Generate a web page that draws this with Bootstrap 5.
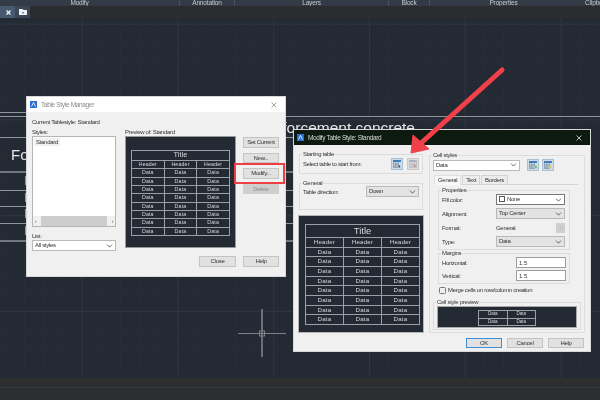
<!DOCTYPE html>
<html lang="en">
<head>
    <meta charset="UTF-8">
    <title>Table Style</title>
    <link href="https://cdn.jsdelivr.net/npm/bootstrap@5.3.0/dist/css/bootstrap.min.css" rel="stylesheet">
    <style>
        html, body { height: 400px; overflow: hidden; background: #232a33; }
        body { font-family: "Liberation Sans", Arial, sans-serif; font-size: 6px; line-height: 8px; letter-spacing: -.3px; color: #333; }

        /* autocad chrome */
        .cad-screen { width: 600px; height: 400px; position: relative; overflow: hidden; filter: blur(.3px); }
        .cad-ribbon { height: 6px; background: #343b47; color: #c4c9d0; overflow: hidden; letter-spacing: -.15px; }
        .cad-ribbon span { height: 6px; line-height: 5px; font-size: 6.5px; text-align: center; border-right: 1px solid #4a515c; }
        .cad-tabs { height: 12px; background: #2a2c2f; }
        .cad-tab { width: 30px; background: #3b4656; }
        .cad-tab-x { width: 15px; background: #46596f; }
        .cad-canvas {
            flex: 1 1 auto;
            position: relative;
            background-color: #232a33;
            background-image:
                linear-gradient(90deg, #2e3540 1px, transparent 1px),
                linear-gradient(#2e3540 1px, transparent 1px),
                linear-gradient(90deg, #262d36 1px, transparent 1px),
                linear-gradient(#262d36 1px, transparent 1px);
            background-size: 95.8px 100%, 100% 95.8px, 19.16px 100%, 100% 19.16px;
            background-position: 81.6px 0, 0 5.6px, 5px 0, 0 5.4px;
        }
        .cad-status { height: 22px; background: #2c2e30; }
        .cad-status div { height: 1px; margin-top: 9px; background: #2f3a43; }
        .cad-drawing { position: absolute; left: 0; top: 0; letter-spacing: 0; }
        .cad-drawing text { font-family: "Liberation Sans", Arial, sans-serif; fill: #e4e6e8; }

        /* windows */
        .win { position: absolute; background: #f0f0f0; box-shadow: 0 0 0 1px #d8d8d8; }
        .win-manager { left: 27px; top: 97px; width: 258px; height: 179px; }
        .win-modify { left: 294px; top: 130px; width: 296px; height: 221px; }
        .win-title { height: 15px; padding: 0 4px 0 3px; background: #fff; color: #8a8a8a; font-size: 6.5px; letter-spacing: -.33px; }
        .win-modify .win-title { background: #0c1a0f; color: #d8dcd8; }
        .win-icon { width: 7px; height: 7px; margin-right: 4px; flex: none; }

        /* form bits squeezed to the size of the screenshot */
        .w-label { display: block; white-space: nowrap; }
        .w-btn {
            width: 36px; height: 10.5px; padding: 0; font-size: 6px; line-height: 9px; letter-spacing: -.3px; color: #333;
            background: #e1e1e1; border: 1px solid #c4c4c4; border-radius: 0;
        }
        .w-btn.disabled, .w-btn:disabled { background: #cfcfcf; color: #8c8c8c; border-color: #cfcfcf; opacity: 1; }
        .w-btn-ok { border-color: #3f8fd6; }
        .w-more { width: 9px; height: 10px; line-height: 7px; }
        .w-select {
            height: 11px; min-height: 0; padding: 0 0 0 2px; font-size: 6px; line-height: 9px; letter-spacing: -.3px; color: #333;
            border: 1px solid #b9b9b9; border-radius: 0; background-position: right 2px center; background-size: 7px 6px;
        }
        .w-select-grey { background-color: #e3e3e3; }
        .w-select-dark { border-color: #777; }
        .w-input {
            width: 50px; height: 11px; min-height: 0; padding: 0 0 0 2px; font-size: 6px; line-height: 9px; color: #333;
            border: 1px solid #9d9d9d; border-radius: 0;
        }
        .w-group { margin: 0; padding: 0 3px 2px 3px; border: 1px solid #dcdcdc; min-width: 0; }
        .w-group legend {
            float: none; width: auto; margin: 0 0 0 -1px; padding: 0 1px; font-size: 6px; line-height: 8px; color: #333;
        }
        .w-tool { width: 12px; height: 12px; padding: 1px; flex: none; background: #dcdcdc; border: 1px solid #c8c8c8; display: flex; }
        .w-tool-on { background: #cfdce8; border-color: #a9bfd2; }

        /* manager */
        .mgr-body { padding: 6px 6px 0 5px; }
        .mgr-list { width: 84px; height: 91px; background: #fff; border: 1px solid #b5b5b5; }
        .mgr-item { margin: 1px; padding: 0 2px; background: #f0f0f0; width: 26px; }
        .mgr-scroll { height: 10px; background: #f0f0f0; color: #555; font-size: 5px; line-height: 10px; padding: 0 2px; }
        .mgr-thumb { flex: 1 1 auto; margin: 0 5px; background: #cdcdcd; }
        .mgr-preview { width: 111px; height: 112px; padding: 13px 5px 0 5px; background: #232a33; border: 1px solid #9a9a9a; }
        .mgr-side { width: 36px; margin-left: 7px; padding-top: 1px; gap: 5px; }
        .mgr-red { position: absolute; left: 207px; top: 66px; width: 51px; height: 21px; border: 2px solid #ec4046; pointer-events: none; }

        /* the little cad tables */
        .cad-table { margin: 0; width: 100%; table-layout: fixed; border-collapse: collapse; --bs-table-bg: transparent; --bs-table-color: #d6d9dc; color: #d6d9dc; }
        .cad-table td, .cad-table th {
            padding: 0; border: 1px solid #9aa0a6; text-align: center; font-weight: 400;
            background: transparent; color: #d6d9dc; box-shadow: none;
        }
        .cad-small td, .cad-small th { height: 8px; font-size: 5.2px; line-height: 6px; letter-spacing: .2px; }
        .cad-small tr:nth-child(3n) td { height: 9px; }
        .cad-small th.cad-cap { height: 10px; font-size: 7.5px; line-height: 8px; letter-spacing: 0; }
        .cad-big td, .cad-big th { height: 10px; font-size: 6.2px; line-height: 7px; letter-spacing: .2px; }
        .cad-big tr:nth-child(3n) td { height: 9px; }
        .cad-big th.cad-cap { height: 13px; font-size: 9.5px; line-height: 11px; letter-spacing: 0; }
        .cad-mini td { height: 7.5px; font-size: 4.5px; line-height: 5px; letter-spacing: 0; }

        /* modify */
        .mod-left { width: 126px; margin: 5px 5px 0 4px; }
        .mod-left .w-group { margin: 0 1px 5px 1px; }
        .mod-preview { height: 118px; padding: 8px 3px 0 6px; background: #232a33; border: 1px solid #b5b5b5; }
        .mod-right { width: 156px; margin-top: 6px; }
        .mod-panel { height: 182px; padding-bottom: 0; }
        .mod-tabs { --bs-nav-tabs-border-color: #d4d4d4; margin: 4px 3px 0 1px; height: 10px; flex-wrap: nowrap; }
        .mod-tabs .nav-link {
            padding: 0 3px; font-size: 6px; line-height: 8px; height: 10px; color: #333; border-radius: 0;
            border: 1px solid #d4d4d4; margin: 0 1px 0 0; background: #ececec;
        }
        .mod-tabs .nav-link.active { background: #f7f7f7; color: #333; border-bottom-color: #f7f7f7; }
        .mod-page { margin: 1px 11px 0 5px; }
        .mod-row { height: 11px; margin-bottom: 3px; }
        .mod-field { width: 69px; margin-left: auto; margin-right: 1px; }
        .mod-check { width: 7px; height: 7px; margin: 0 2px 0 0; border-radius: 0; border: 1px solid #777; background-color: #f0f0f0; float: none; }
        .mod-cellprev { height: 22px; padding-top: 3px; background: #232a33; border: 1px solid #a8a8a8; }
        .mod-foot { position: absolute; right: 6px; bottom: 3px; gap: 5px; }
        .swatch { width: 6px; height: 6px; margin-right: 2px; border: 1px solid #555; background: #fff; display: inline-block; vertical-align: -1px; }
    </style>
</head>
<body>
<div class="cad-screen d-flex flex-column">

    <!-- ribbon panel titles, mostly cut off by the top of the picture -->
    <div class="cad-ribbon d-flex flex-shrink-0">
        <span class="flex-shrink-0" style="width: 180px; padding-right: 20px">Modify</span>
        <span class="flex-shrink-0" style="width: 55px">Annotation</span>
        <span class="flex-shrink-0" style="width: 154px">Layers</span>
        <span class="flex-shrink-0" style="width: 41px">Block</span>
        <span class="flex-shrink-0" style="width: 148px; border-right-color: #343b47">Properties</span>
        <span class="flex-shrink-0 border-0" style="width: 22px; text-align: left; padding-left: 7px; overflow: hidden; white-space: nowrap">Clipboard</span>
    </div>

    <div class="cad-tabs d-flex flex-shrink-0">
        <div class="cad-tab d-flex">
            <div class="cad-tab-x d-flex align-items-center justify-content-end pe-1">
                <svg width="5" height="5" viewBox="0 0 5 5"><path d="M0.5 0.5l4 4M4.5 0.5l-4 4" stroke="#fff" stroke-width="1.1"/></svg>
            </div>
            <div class="d-flex align-items-center ps-1">
                <svg width="8" height="6" viewBox="0 0 8 6"><path d="M0 0h3.5l1 1H8v5H0z" fill="#eef1f5"/><path d="M3 3h2v1.500H3z" fill="#7d93ad"/></svg>
            </div>
        </div>
    </div>

    <div class="cad-canvas">
        <svg class="cad-drawing" width="600" height="360" viewBox="0 18 600 360">
            <!-- table in the drawing, behind the dialogs -->
            <g stroke="#8f959c" fill="none">
                <path d="M0 112.500H30M0 116.500H600M0 137.500H294M0 190.500H294M0 206.500H294M0 223.500H294"/>
                <path d="M0 172H294M0 241H294" stroke-width="2" stroke="#70767d"/>
            </g>
            <text x="11" y="160" font-size="15">Fo</text>
            <text x="24.500" y="185" font-size="12">F</text>
            <text x="24.500" y="202" font-size="12">F</text>
            <text x="24.500" y="218" font-size="12">F</text>
            <text x="24.500" y="235" font-size="12">F</text>
            <text x="415" y="133" font-size="15.500" text-anchor="end">Reinforcement concrete</text>
            <!-- crosshair -->
            <g stroke="#7b828a" fill="none">
                <path d="M238 333.500H286"/>
                <path d="M262 309V357" stroke-width="1.600"/>
                <rect x="259.500" y="331" width="5" height="5"/>
            </g>
        </svg>
    </div>

    <div class="cad-status flex-shrink-0"><div></div></div>

    <!-- Table Style Manager -->
    <div class="win win-manager">
        <div class="win-title d-flex align-items-center">
            <svg class="win-icon" viewBox="0 0 7 7"><rect width="7" height="7" fill="#2b6fd6"/><path d="M1.500 5.500L3.500 1.500L5.500 5.500" stroke="#fff" fill="none" stroke-width=".8"/></svg>
            <span>Table Style Manager</span>
            <svg class="ms-auto me-1" width="6" height="6" viewBox="0 0 6 6"><path d="M0.500 0.500l5 5M5.500 0.500l-5 5" stroke="#8d8d8d" stroke-width=".8"/></svg>
        </div>
        <div class="mgr-body">
            <span class="w-label">Current Tablestyle: Standard</span>
            <div class="d-flex mt-1">
                <div>
                    <span class="w-label" style="margin-top: -2px">Styles:</span>
                    <div class="mgr-list d-flex flex-column">
                        <div class="mgr-item">Standard</div>
                        <div class="mgr-scroll d-flex mt-auto"><span>‹</span><div class="mgr-thumb"></div><span>›</span></div>
                    </div>
                    <span class="w-label mt-1" style="padding-top: 1px">List:</span>
                    <select class="form-select w-select" style="width: 84px"><option>All styles</option></select>
                </div>
                <div style="margin-left: 9px">
                    <span class="w-label" style="margin-top: -2px">Preview of: Standard</span>
                    <div class="mgr-preview">
                        <table class="table cad-table cad-small">
                            <tr><th class="cad-cap" colspan="3">Title</th></tr>
                            <tr><th>Header</th><th>Header</th><th>Header</th></tr>
                            <tr><td>Data</td><td>Data</td><td>Data</td></tr>
                            <tr><td>Data</td><td>Data</td><td>Data</td></tr>
                            <tr><td>Data</td><td>Data</td><td>Data</td></tr>
                            <tr><td>Data</td><td>Data</td><td>Data</td></tr>
                            <tr><td>Data</td><td>Data</td><td>Data</td></tr>
                            <tr><td>Data</td><td>Data</td><td>Data</td></tr>
                            <tr><td>Data</td><td>Data</td><td>Data</td></tr>
                            <tr><td>Data</td><td>Data</td><td>Data</td></tr>
                        </table>
                    </div>
                </div>
                <div class="mgr-side d-flex flex-column">
                    <div style="height: 2px; margin-bottom: -1px"></div>
                    <button class="btn w-btn" type="button">Set Current</button>
                    <button class="btn w-btn" type="button">New...</button>
                    <button class="btn w-btn" type="button">Modify...</button>
                    <button class="btn w-btn" type="button" disabled>Delete</button>
                </div>
            </div>
            <div class="d-flex justify-content-end" style="gap: 7px; margin-top: 5px">
                <button class="btn w-btn" type="button" style="width: 37px">Close</button>
                <button class="btn w-btn" type="button">Help</button>
            </div>
        </div>
        <div class="mgr-red"></div>
    </div>

    <!-- Modify Table Style -->
    <div class="win win-modify">
        <div class="win-title d-flex align-items-center">
            <svg class="win-icon" viewBox="0 0 7 7"><rect width="7" height="7" fill="#2b6fd6"/><path d="M1.500 5.500L3.500 1.500L5.500 5.500" stroke="#fff" fill="none" stroke-width=".8"/></svg>
            <span>Modify Table Style: Standard</span>
            <svg class="ms-auto me-1" width="6" height="6" viewBox="0 0 6 6"><path d="M0.500 0.500l5 5M5.500 0.500l-5 5" stroke="#e8e8e8" stroke-width=".8"/></svg>
        </div>
        <div class="d-flex">
            <div class="mod-left">
                <fieldset class="w-group" style="padding-bottom: 3px">
                    <legend>Starting table</legend>
                    <div class="d-flex align-items-center justify-content-between">
                        <span>Select table to start from:</span>
                        <div class="d-flex" style="gap: 4px">
                            <div class="w-tool w-tool-on">
                                <svg viewBox="0 0 10 10"><path d="M0 0h10v2.500H0z" fill="#3f7fb8"/><path d="M0.500 2.500v7h7M3.500 2.500v7M6.500 2.500v4M0.500 5h7M0.500 7.500h6" stroke="#5b7a95" fill="none" stroke-width=".7"/><path d="M7 6l2.500 2-1.200.2.600 1.300-.7.300-.6-1.300-.8.700z" fill="#333"/></svg>
                            </div>
                            <div class="w-tool">
                                <svg viewBox="0 0 10 10"><path d="M0 0h10v2.500H0z" fill="#a8b3be"/><path d="M0.500 2.500v7h9v-7M3.500 2.500v7M6.500 2.500v7M0.500 5h9M0.500 7.500h9" stroke="#aab2ba" fill="none" stroke-width=".7"/><path d="M5.500 5.500l3.500 3.500M9 5.500l-3.500 3.500" stroke="#d47a7a" stroke-width=".9"/></svg>
                            </div>
                        </div>
                    </div>
                </fieldset>
                <fieldset class="w-group">
                    <legend>General</legend>
                    <div class="d-flex justify-content-between" style="height: 20px">
                        <span style="padding-top: 1px">Table direction:</span>
                        <select class="form-select w-select w-select-grey" style="width: 53px; margin-top: -1px"><option>Down</option></select>
                    </div>
                </fieldset>
                <div class="mod-preview">
                    <table class="table cad-table cad-big">
                        <tr><th class="cad-cap" colspan="3">Title</th></tr>
                        <tr><th>Header</th><th>Header</th><th>Header</th></tr>
                        <tr><td>Data</td><td>Data</td><td>Data</td></tr>
                        <tr><td>Data</td><td>Data</td><td>Data</td></tr>
                        <tr><td>Data</td><td>Data</td><td>Data</td></tr>
                        <tr><td>Data</td><td>Data</td><td>Data</td></tr>
                        <tr><td>Data</td><td>Data</td><td>Data</td></tr>
                        <tr><td>Data</td><td>Data</td><td>Data</td></tr>
                        <tr><td>Data</td><td>Data</td><td>Data</td></tr>
                        <tr><td>Data</td><td>Data</td><td>Data</td></tr>
                    </table>
                </div>
            </div>
            <div class="mod-right">
                <fieldset class="w-group mod-panel">
                    <legend>Cell styles</legend>
                    <div class="d-flex align-items-center" style="gap: 3px">
                        <select class="form-select w-select" style="width: 87px"><option>Data</option></select>
                        <div class="w-tool w-tool-on ms-1 mx-0">
                            <svg viewBox="0 0 10 10"><path d="M0 0h10v2.500H0z" fill="#3f7fb8"/><path d="M0.500 2.500v7h7M3.500 2.500v7M6.500 2.500v4M0.500 5h7M0.500 7.500h6" stroke="#5b7a95" fill="none" stroke-width=".7"/><path d="M7 7.500h3M8.500 6v3" stroke="#4aa84a"/></svg>
                        </div>
                        <div class="w-tool w-tool-on ms-0">
                            <svg viewBox="0 0 10 10"><path d="M0 0h10v2.500H0z" fill="#3f7fb8"/><path d="M0.500 2.500v7h7M3.500 2.500v7M6.500 2.500v4M0.500 5h7M0.500 7.500h6" stroke="#5b7a95" fill="none" stroke-width=".7"/><path d="M6.500 6h3v3h-3z" fill="#e6c84a"/></svg>
                        </div>
                    </div>
                    <ul class="nav nav-tabs mod-tabs">
                        <li class="nav-item"><a class="nav-link active" href="#">General</a></li>
                        <li class="nav-item"><a class="nav-link" href="#">Text</a></li>
                        <li class="nav-item"><a class="nav-link" href="#">Borders</a></li>
                    </ul>
                    <div class="mod-page">
                        <fieldset class="w-group">
                            <legend>Properties</legend>
                            <div class="d-flex align-items-center mod-row">
                                <span>Fill color:</span>
                                <div class="form-select w-select w-select-dark mod-field"><i class="swatch"></i>None</div>
                            </div>
                            <div class="d-flex align-items-center mod-row">
                                <span>Alignment:</span>
                                <select class="form-select w-select w-select-grey mod-field"><option>Top Center</option></select>
                            </div>
                            <div class="d-flex align-items-center mod-row">
                                <span>Format:</span>
                                <span style="margin-left: auto; width: 60px">General</span>
                                <button class="btn w-btn w-more" type="button" disabled style="margin-right: 1px">...</button>
                            </div>
                            <div class="d-flex align-items-center mod-row mb-0">
                                <span>Type:</span>
                                <select class="form-select w-select w-select-grey mod-field"><option>Data</option></select>
                            </div>
                        </fieldset>
                        <fieldset class="w-group" style="margin-top: -1px">
                            <legend>Margins</legend>
                            <div class="d-flex align-items-center justify-content-between" style="margin-bottom: 2px">
                                <span>Horizontal:</span>
                                <input class="form-control w-input" value="1.5">
                            </div>
                            <div class="d-flex align-items-center justify-content-between">
                                <span>Vertical:</span>
                                <input class="form-control w-input" value="1.5">
                            </div>
                        </fieldset>
                    </div>
                    <div class="d-flex align-items-center" style="margin: 2px 0 0 6px">
                        <input class="form-check-input mod-check" type="checkbox">
                        <span>Merge cells on row/column creation</span>
                    </div>
                    <fieldset class="w-group" style="margin-top: 4px; padding-bottom: 1px">
                        <legend>Cell style preview</legend>
                        <div class="mod-cellprev d-flex justify-content-center">
                            <table class="table cad-table cad-mini" style="width: 58px; height: 15px">
                                <tr><td>Data</td><td>Data</td></tr>
                                <tr><td>Data</td><td>Data</td></tr>
                            </table>
                        </div>
                    </fieldset>
                </fieldset>
            </div>
        </div>
        <div class="mod-foot d-flex">
            <button class="btn w-btn w-btn-ok" type="button">OK</button>
            <button class="btn w-btn" type="button">Cancel</button>
            <button class="btn w-btn" type="button">Help</button>
        </div>
    </div>

    <!-- red arrow pasted over the screenshot -->
    <svg class="position-absolute top-0 start-0" width="600" height="400" viewBox="0 0 600 400" style="pointer-events: none">
        <path d="M502 70L420 144" stroke="#f0404a" stroke-width="5" stroke-linecap="round"/>
        <path d="M411 153L413 135L429 149z" fill="#f0404a" stroke="#f0404a" stroke-linejoin="round"/>
    </svg>
</div>
<script src="https://cdn.jsdelivr.net/npm/bootstrap@5.3.0/dist/js/bootstrap.bundle.min.js"></script>
</body>
</html>
